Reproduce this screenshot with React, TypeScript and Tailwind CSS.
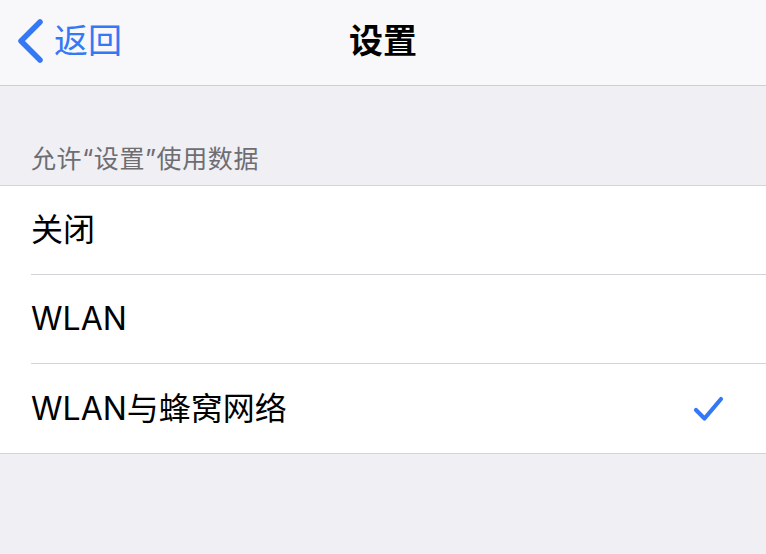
import React from "react";

const font = { fontFamily: 'Inter, "Noto Sans CJK SC", sans-serif' };

function Row({ label, checked, last }: { label: string; checked?: boolean; last?: boolean }) {
  return (
    <div className="flex h-[89px] pl-[31px] bg-white">
      <div className={`flex flex-1 items-center justify-between pr-[42px] ${last ? "" : "border-b border-[#d4d4d8]"}`}>
        <span className="text-[32px] text-black leading-none">{label}</span>
        {checked && (
          <svg width="32" height="32" viewBox="0 0 32 32" fill="none">
            <path d="M4 17 L12.5 25.5 L29 6" stroke="#3478f6" strokeWidth="4.2" strokeLinecap="round" strokeLinejoin="round" />
          </svg>
        )}
      </div>
    </div>
  );
}

export default function App() {
  return (
    <div className="w-[766px] h-[554px] bg-[#efeff4] overflow-hidden" style={font}>
      <div className="relative h-[86px] bg-[#f8f8fa] border-b border-[#cfcfd3] flex items-center justify-center">
        <div className="absolute left-[16px] top-[19px] flex items-center gap-[8px]">
          <svg width="30" height="44" viewBox="0 0 30 44" fill="none">
            <path d="M24 3 L5 22 L24 41" stroke="#3478f6" strokeWidth="5.5" strokeLinecap="round" strokeLinejoin="round" />
          </svg>
          <span className="text-[34px] text-[#3478f6] leading-none">返回</span>
        </div>
        <span className="text-[34px] font-bold text-black leading-none -mt-[3px]">设置</span>
      </div>
      <div className="h-[99px] flex items-end pl-[31px] pb-[13px]">
        <span className="text-[25px] tracking-[0.6px] text-[#6d6d72] leading-none">允许“设置”使用数据</span>
      </div>
      <div className="border-t border-b border-[#d4d4d8]">
        <Row label="关闭" />
        <Row label="WLAN" />
        <Row label="WLAN与蜂窝网络" checked last />
      </div>
    </div>
  );
}
